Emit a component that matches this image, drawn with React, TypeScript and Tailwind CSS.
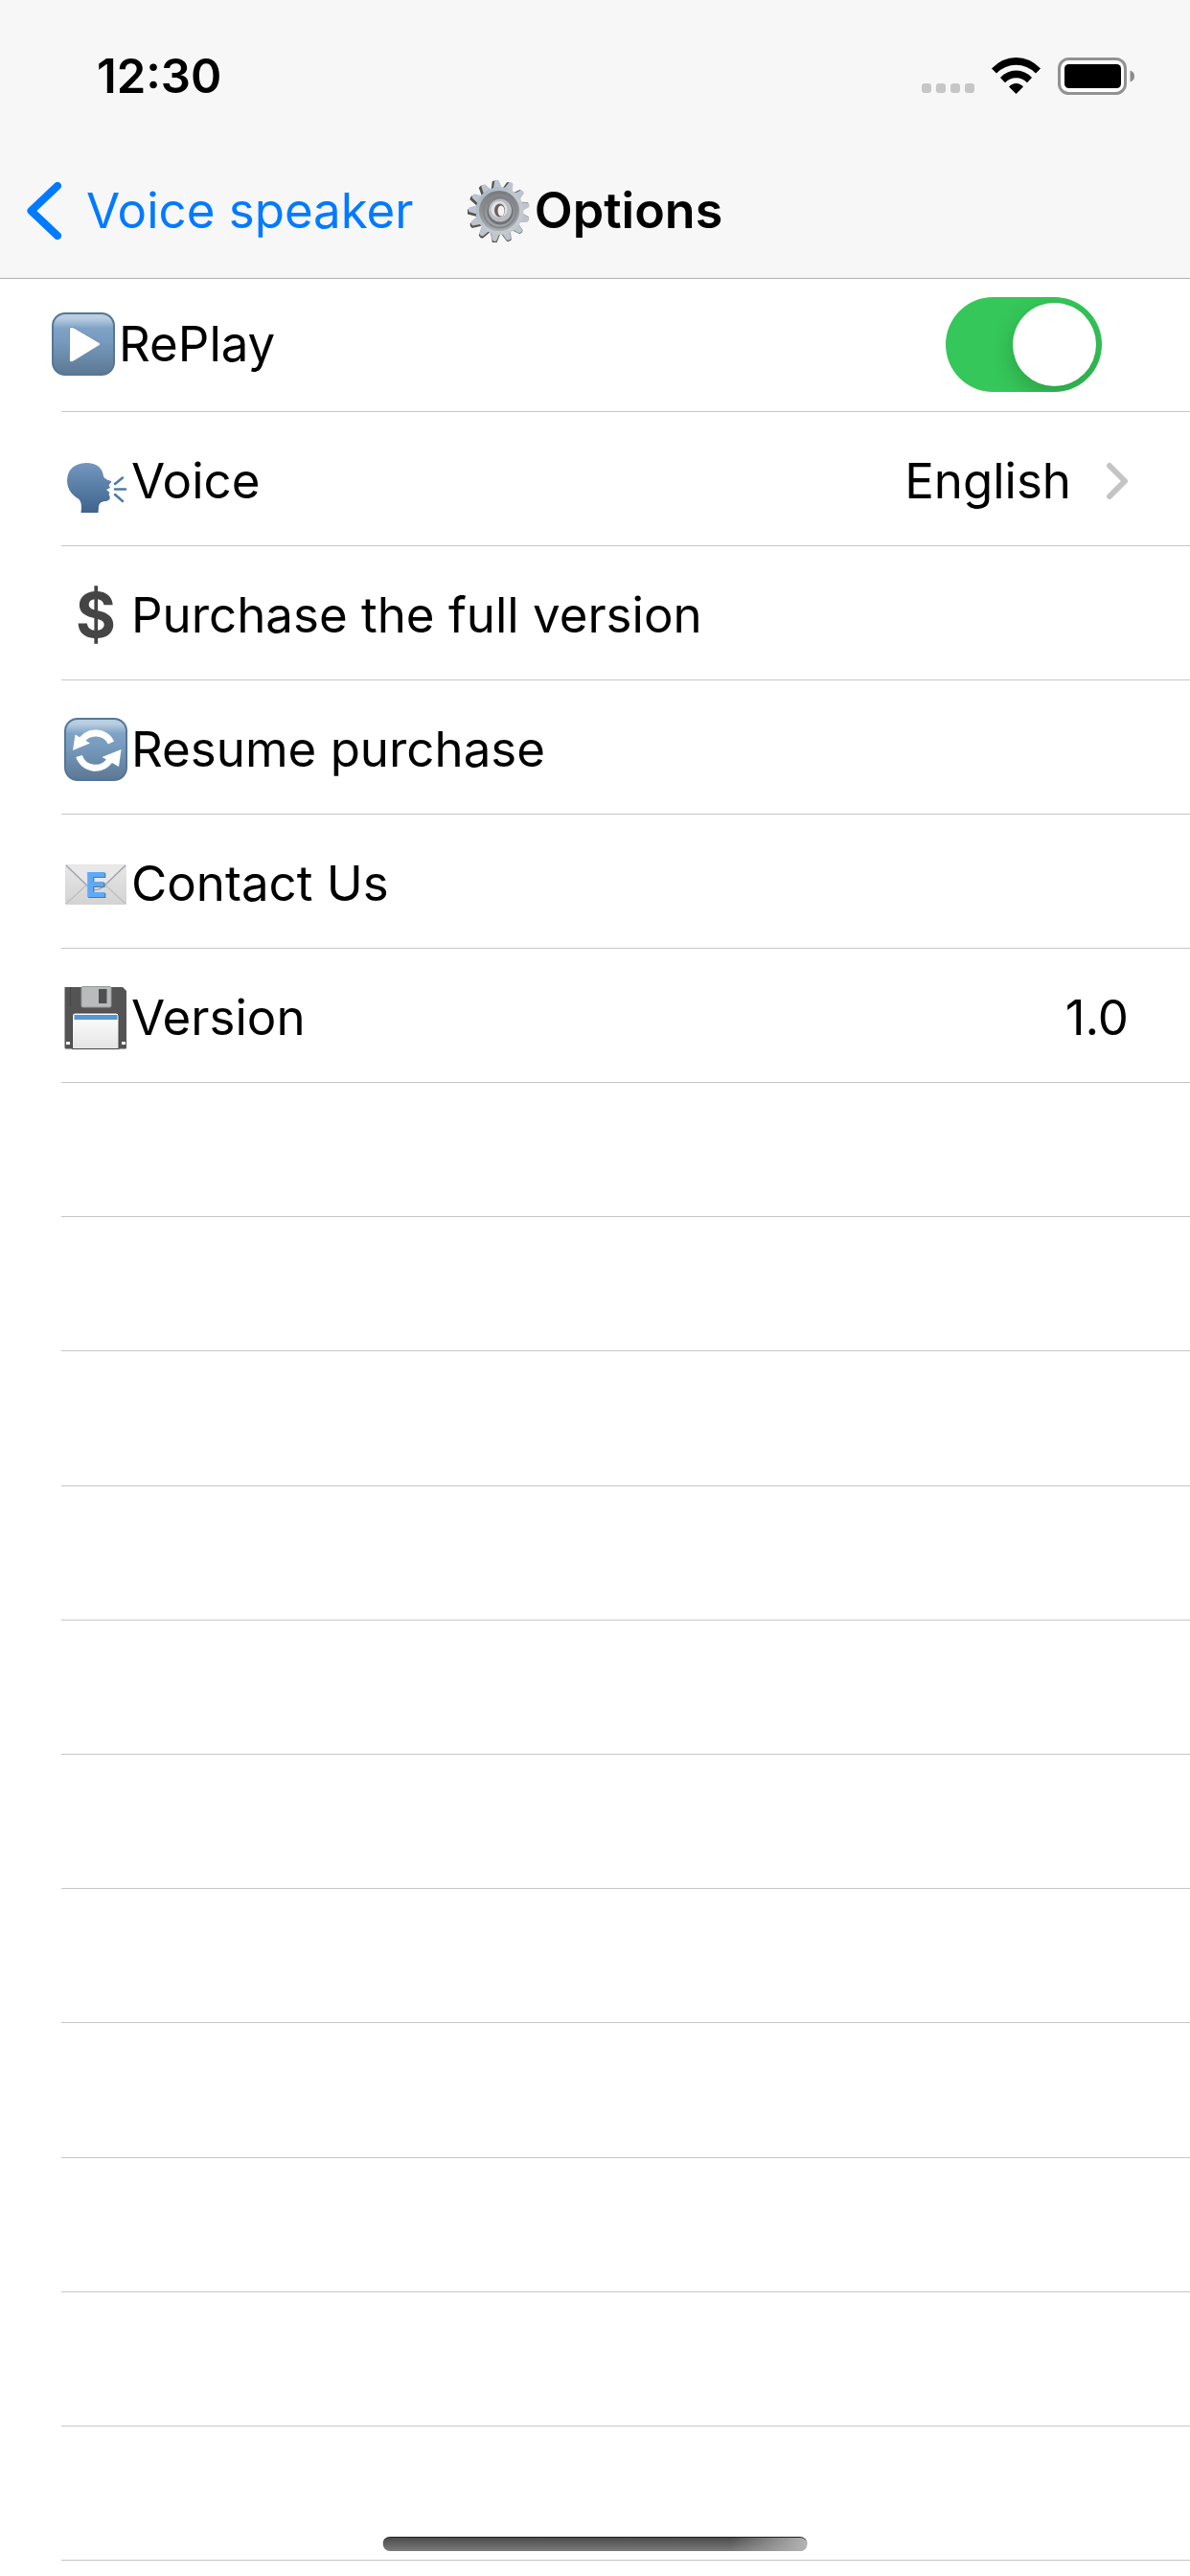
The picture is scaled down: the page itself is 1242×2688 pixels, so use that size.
import React, { useState } from 'react';

const GearIcon = () => {
  const teeth = Array.from({ length: 13 }, (_, i) => (i * 360) / 13);
  return (
    <svg viewBox="0 0 66 66" className="size-[66px]" aria-hidden="true">
      <defs>
        <linearGradient id="gearRing" x1="0" y1="0" x2="0" y2="1">
          <stop offset="0" stopColor="#77797c" />
          <stop offset="1" stopColor="#a9acaf" />
        </linearGradient>
        <linearGradient id="gearBody" x1="0" y1="0" x2="1" y2="1">
          <stop offset="0" stopColor="#a3b1bd" />
          <stop offset="0.5" stopColor="#c0c8d0" />
          <stop offset="1" stopColor="#c9cace" />
        </linearGradient>
      </defs>
      <g fill="#56534f">
        {teeth.map((a) => (
          <path
            key={a}
            d="M27 12 L29.5 1 Q32 -.5 34.5 1 L38 12 Z"
            transform={`translate(-1 1) rotate(${a - 5} 33 33)`}
          />
        ))}
      </g>
      <g fill="#bcc5cf">
        {teeth.map((a) => (
          <path
            key={a}
            d="M28 13 L31 1.5 Q33 0 35.5 1.5 L39 13 Z"
            transform={`rotate(${a - 5} 33 33)`}
          />
        ))}
      </g>
      <circle cx="33.5" cy="33" r="25" fill="url(#gearBody)" />
      <circle cx="33" cy="33" r="21" fill="url(#gearRing)" />
      <circle cx="33.5" cy="33.5" r="17" fill="none" stroke="#85888b" strokeWidth="2" />
      <circle cx="34" cy="34" r="13.5" fill="#6f7173" />
      <circle cx="34" cy="32.5" r="12" fill="#b9bcc2" />
      <circle cx="33" cy="31.5" r="8.5" fill="#dfe1e6" />
      <ellipse cx="33.5" cy="32.5" rx="5.5" ry="7" fill="#6b5f58" />
      <ellipse cx="35" cy="33" rx="3.5" ry="5.5" fill="#f4f3f2" />
    </svg>
  );
};

const BlueTile = ({ id, children }: { id: string; children: React.ReactNode }) => (
  <svg viewBox="0 0 66 66" className="size-[66px]" aria-hidden="true">
    <defs>
      <linearGradient id={id} x1="0" y1="0" x2="0" y2="1">
        <stop offset="0" stopColor="#b9cfe1" />
        <stop offset="0.08" stopColor="#b9cee0" />
        <stop offset="0.24" stopColor="#7fa3c6" />
        <stop offset="0.45" stopColor="#779bbe" />
        <stop offset="1" stopColor="#5c7893" />
      </linearGradient>
    </defs>
    <rect x="1" y="1" width="64" height="64" rx="13" fill={`url(#${id})`} stroke="#567696" strokeWidth="2" />
    {children}
  </svg>
);

const PlayIcon = () => (
  <BlueTile id="playTile">
    <path
      d="M20 15.5 Q21.500 15 24 16.500 L49.500 31.500 Q52 33 49.500 34.500 L23.500 50.500 Q19 53 18.500 50 V17 Q18.500 15.700 20 15.500 Z"
      fill="#fff"
      stroke="#65829f"
      strokeWidth="0.8"
    />
  </BlueTile>
);

const RefreshIcon = () => (
  <BlueTile id="refreshTile">
    <path d="M18 24 A18 18 0 0 1 49 26" fill="none" stroke="#fff" strokeWidth="7" />
    <path d="M11.500 17.500 L27 26.500 L9 34 Z" fill="#fff" />
    <path d="M15.500 40 A18 18 0 0 0 48 43.500" fill="none" stroke="#fff" strokeWidth="7" />
    <path d="M59.500 33 L57 51 L39.500 41 Z" fill="#fff" />
  </BlueTile>
);

const VoiceIcon = () => (
  <svg viewBox="0 0 66 66" className="size-[66px]" aria-hidden="true">
    <defs>
      <linearGradient id="voiceHead" x1="0" y1="0" x2="0" y2="1">
        <stop offset="0" stopColor="#7397bd" />
        <stop offset="1" stopColor="#3e638d" />
      </linearGradient>
    </defs>
    <path
      d="M17.500 66 L18 61 Q18 55 15.500 52 Q3 45 3 32 Q4 15 23 14 Q39 14 41 28 Q42 31 49 33 Q50 34 46.500 37 L48 40 L44 42 L47.500 45 L46.500 47 Q50 52 44 54 Q37 54 36 59 L35.500 66 Z"
      fill="url(#voiceHead)"
    />
    <g stroke="#4e7aa3" strokeWidth="2.5" strokeLinecap="round">
      <path d="M53 36 L61 29.500" />
      <path d="M53 41.500 H64" />
      <path d="M53 47 L61 54" />
    </g>
  </svg>
);

const DollarIcon = () => (
  <span
    aria-hidden="true"
    className="flex size-[66px] items-center justify-center text-[64px] leading-none font-bold text-[#454545]"
  >
    $
  </span>
);

const MailIcon = () => (
  <svg viewBox="0 0 66 66" className="size-[66px]" aria-hidden="true">
    <defs>
      <linearGradient id="mailPaper" x1="0" y1="0" x2="0" y2="1">
        <stop offset="0" stopColor="#e6e6e6" />
        <stop offset="1" stopColor="#d3d3d3" />
      </linearGradient>
    </defs>
    <rect x="1" y="13" width="64" height="42" rx="1.500" fill="url(#mailPaper)" />
    <path d="M2 54 L26 32 M64 54 L40 32" stroke="#bfbfbf" strokeWidth="1.200" />
    <path d="M2 14 L25 36 Q33 43 41 36 L64 14" fill="#e8e8e8" stroke="#a2a4ad" strokeWidth="1.500" />
    <text
      x="34"
      y="48"
      textAnchor="middle"
      fontSize="36"
      fontWeight="800"
      fill="#68717c"
    >
      E
    </text>
    <text
      x="33"
      y="47"
      textAnchor="middle"
      fontSize="36"
      fontWeight="800"
      fill="#5eaaf9"
    >
      E
    </text>
  </svg>
);

const FloppyIcon = () => (
  <svg viewBox="0 0 66 66" className="size-[66px]" aria-hidden="true">
    <defs>
      <linearGradient id="floppyLabel" x1="0" y1="0" x2="0" y2="1">
        <stop offset="0" stopColor="#fff" />
        <stop offset="1" stopColor="#e4e4e4" />
      </linearGradient>
    </defs>
    <path d="M1 1 H61 L65 5 V64 Q65 65.500 63.500 65.500 H2 Q.5 65.500 .5 64 V1.500 Z" fill="#545454" />
    <path d="M6.500 1 V21" stroke="#444" />
    <rect x="18" y="0.500" width="31" height="21.500" rx="1.500" fill="#b9bbbc" stroke="#98999a" />
    <rect x="36" y="3" width="8.500" height="15" fill="#505050" />
    <path d="M8.500 65.500 V31 Q8.500 28 11.500 28 H54 Q57 28 57 31 V65.500 Z" fill="url(#floppyLabel)" stroke="#454545" />
    <rect x="10.500" y="30" width="45" height="5" fill="#5796d2" />
    <rect x="2" y="58" width="4" height="3" fill="#fff" />
    <rect x="60" y="58" width="4" height="3" fill="#fff" />
  </svg>
);

const StatusBar = () => (
  <div className="flex h-[150px] items-center justify-between pt-2 pr-[57px] pl-[101px]">
    <span className="text-[49px] leading-none font-semibold">12:30</span>
    <div className="flex items-center">
      <div className="mt-[26px] mr-[18px] flex gap-[5px]">
        <span className="size-[10px] rounded-[3px] bg-[#c6c6c6]" />
        <span className="size-[10px] rounded-[3px] bg-[#c6c6c6]" />
        <span className="size-[10px] rounded-[3px] bg-[#c6c6c6]" />
        <span className="size-[10px] rounded-[3px] bg-[#c6c6c6]" />
      </div>
      <svg viewBox="0 0 51 38" className="mr-[18px] h-[38px] w-[51px]" aria-label="Wi-Fi">
        <path d="M0 11.500 Q11 0 25.500 0 Q40 0 51 11.500 L46 16.500 Q37 7.800 25.500 7.800 Q14 7.800 5 16.500 Z" />
        <path d="M9 21 Q16 13.500 25.500 13.500 Q35 13.500 42 21 L37 26.200 Q32 21.200 25.500 21.200 Q19 21.200 14 26.200 Z" />
        <path d="M18 30.500 Q21 27 25.500 27 Q30 27 33 30.500 L25.500 38 Z" />
      </svg>
      <svg viewBox="0 0 81 39" className="h-[39px] w-[81px]" aria-label="Battery full">
        <rect x="1.500" y="1.500" width="69" height="36" rx="10" fill="#fff" stroke="#929292" strokeWidth="3" />
        <rect x="7" y="7" width="59" height="25" rx="4.500" />
        <path d="M75.500 13.500 Q80 15 80 19.500 Q80 24 75.500 25.500 Z" fill="#8d8d8d" />
      </svg>
    </div>
  </div>
);

interface RowProps {
  icon: React.ReactNode;
  title: string;
  value?: string;
  hasMore?: boolean;
  isButton?: boolean;
}

const Row: React.FC<RowProps> = ({ icon, title, value, hasMore, isButton }) => {
  const Tag = isButton ? 'button' : 'div';
  return (
    <li>
      <Tag className="flex h-[139px] w-full items-center pt-[4px] pr-[64px] pl-[67px] text-left">
        {icon}
        <span className="pl-[4px]">{title}</span>
        {value && <span className="ml-auto">{value}</span>}
        {hasMore && (
          <svg viewBox="0 0 24 40" className="ml-[36px] h-[40px] w-[24px]" fill="none" aria-hidden="true">
            <path
              d="M4 4 L20 20 L4 36"
              stroke="#c4c4c6"
              strokeWidth="6"
              strokeLinecap="round"
              strokeLinejoin="round"
            />
          </svg>
        )}
      </Tag>
      <div className="ml-[64px] h-px bg-[#c6c6c8]" />
    </li>
  );
};

const App = () => {
  const [replay, setReplay] = useState(true);

  return (
    <div className="relative flex min-h-screen flex-col bg-white font-['Inter',sans-serif] text-[51px] leading-[64px] text-black">
      <header className="border-b border-[#b2b2b2] bg-[#f7f7f7]">
        <StatusBar />
        <nav className="grid h-[140px] grid-cols-[1fr_auto_1fr] items-center">
          <a href="#back" className="flex items-center pl-[28px] whitespace-nowrap text-[#007aff]">
            <svg viewBox="0 0 36 60" className="mr-[26px] h-[60px] w-[36px]" fill="none" aria-hidden="true">
              <path
                d="M32 4 L4.500 30 L32 56"
                stroke="currentColor"
                strokeWidth="8"
                strokeLinecap="round"
                strokeLinejoin="round"
              />
            </svg>
            Voice speaker
          </a>
          <h1 className="flex items-center gap-[4px] text-[52px] font-semibold">
            <GearIcon />
            Options
          </h1>
        </nav>
      </header>

      <main className="flex flex-1 flex-col pb-4">
        <ul>
          <li>
            <label className="flex h-[138px] items-center pr-[92px] pb-[2px] pl-[54px]">
              <PlayIcon />
              <span className="pl-[4px]">RePlay</span>
              <input
                type="checkbox"
                role="switch"
                checked={replay}
                onChange={(e) => setReplay(e.target.checked)}
                className="ml-auto flex h-[99px] w-[163px] appearance-none items-center overflow-hidden rounded-full bg-[#e9e9ea] p-[6px] before:size-[87px] before:rounded-full before:bg-white before:shadow-[0_9px_24px_rgba(0,0,0,0.2)] checked:justify-end checked:bg-[#35c759]"
              />
            </label>
            <div className="ml-[64px] h-px bg-[#c6c6c8]" />
          </li>
          <Row icon={<VoiceIcon />} title="Voice" value="English" hasMore isButton />
          <Row icon={<DollarIcon />} title="Purchase the full version" isButton />
          <Row icon={<RefreshIcon />} title="Resume purchase" isButton />
          <Row icon={<MailIcon />} title="Contact Us" isButton />
          <Row icon={<FloppyIcon />} title="Version" value="1.0" />
        </ul>

        {/* empty rows fill the rest of the screen */}
        <div className="ml-[64px] flex flex-1 flex-col" aria-hidden="true">
          {Array.from({ length: 11 }, (_, i) => (
            <div key={i} className="flex-1 border-b border-[#c6c6c8]" />
          ))}
        </div>
      </main>

      <div className="absolute bottom-[26px] left-1/2 h-[15px] w-[443px] -translate-x-1/2 overflow-hidden rounded-full border-t border-[#222] bg-linear-to-b from-[#4c4c4c] to-[#7c7c7c]">
        <div className="ml-auto h-full w-[80px] bg-linear-to-r from-transparent to-[#b4b4b4]" />
      </div>
    </div>
  );
};

export default App;
